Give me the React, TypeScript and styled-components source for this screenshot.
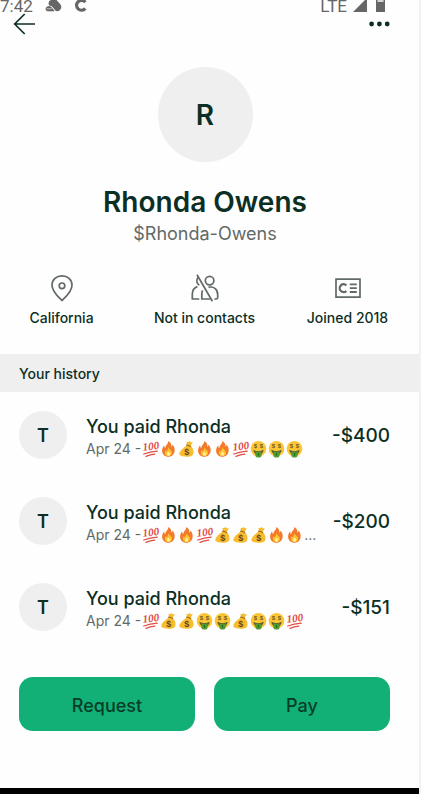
import React from "react";
import styled, { createGlobalStyle } from "styled-components";

const ink = "#0c2f25";
const muted = "#626a66";
const surface = "#efefef";

const GlobalStyle = createGlobalStyle`
  *, *::before, *::after { box-sizing: border-box; }
  body {
    margin: 0;
    background: #fefefe;
    color: ${ink};
    font-family: Inter, "Liberation Sans", sans-serif;
  }
  button { font: inherit; color: inherit; border: 0; padding: 0; background: none; cursor: pointer; }
  h1, h2, p, ul { margin: 0; padding: 0; }
  svg { display: block; flex: none; }
`;

const Page = styled.main`
  display: flex;
  flex-direction: column;
  min-height: 100vh;
  border-right: 2px solid #f1f1f5;
`;

const StatusBar = styled.div`
  display: flex;
  justify-content: space-between;
  align-items: flex-end;
  height: 12px;
  padding: 0 34px 0 0;
  color: #666666;
  font: 400 17px/12px Roboto, sans-serif;
`;

const StatusGroup = styled.div<{ $gap: number }>`
  display: flex;
  align-items: flex-end;
  gap: ${(p) => p.$gap}px;
  height: 12px;
`;

const Carrier = styled.span`
  margin-right: -3px;
`;

const Toolbar = styled.header`
  display: flex;
  justify-content: space-between;
  align-items: center;
  height: 24px;
  padding: 0 29px 0 12px;
`;

const IconButton = styled.button`
  display: grid;
  place-items: center;
  height: 24px;
`;

const Avatar = styled.div<{ $size: number; $font: number }>`
  display: grid;
  place-items: center;
  flex: none;
  width: ${(p) => p.$size}px;
  height: ${(p) => p.$size}px;
  border-radius: 50%;
  background: ${surface};
  font-size: ${(p) => p.$font}px;
  font-weight: 600;
`;

const Profile = styled.section`
  display: flex;
  flex-direction: column;
  align-items: center;
  padding: 31px 28px 0 19px;
`;

const Name = styled.h1`
  margin-top: 22px;
  font-size: 28px;
  line-height: 36px;
  font-weight: 600;
`;

const Handle = styled.p`
  color: ${muted};
  font-size: 18px;
  line-height: 28px;
  font-weight: 400;
`;

const Facts = styled.ul`
  display: grid;
  grid-template-columns: repeat(3, minmax(0, 1fr));
  gap: 58px;
  padding: 26px 29px 26px 19px;
  list-style: none;
`;

const Fact = styled.li`
  display: flex;
  flex-direction: column;
  align-items: center;
  gap: 6px;
  font-size: 14px;
  line-height: 20px;
  font-weight: 500;
  white-space: nowrap;
`;

const SectionTitle = styled.h2`
  padding: 2px 19px 0;
  background: ${surface};
  font-size: 14px;
  line-height: 36px;
  font-weight: 500;
`;

const History = styled.ul`
  display: flex;
  flex-direction: column;
  gap: 38px;
  padding: 19px 29px 0 19px;
  list-style: none;
`;

const Payment = styled.li`
  display: flex;
  align-items: center;
  gap: 19px;
`;

const Details = styled.div`
  flex: 1;
  min-width: 0;
  padding-top: 4px;
`;

const PaymentTitle = styled.p`
  font-size: 18px;
  line-height: 24px;
  font-weight: 500;
`;

const Note = styled.p`
  display: flex;
  align-items: center;
  color: ${muted};
  font-size: 14px;
  line-height: 20px;
  white-space: nowrap;
`;

const NoteDate = styled.span`
  margin-right: 1px;
`;

const Amount = styled.span`
  padding-top: 2px;
  font-size: 19px;
  line-height: 24px;
  font-weight: 500;
`;

const Actions = styled.div`
  display: grid;
  grid-template-columns: 1fr 1fr;
  gap: 19px;
  padding: 46px 29px 24px 19px;
`;

const ActionButton = styled.button`
  && {
    height: 54px;
    padding-top: 2px;
    border-radius: 14px;
    background: #12b076;
    color: #063d29;
    font-size: 18px;
    font-weight: 500;
  }
`;

const BottomBar = styled.div`
  height: 6px;
  margin-top: auto;
  background: #000000;
`;

const EmojiSvg = styled.svg`
  width: 18px;
  height: 18px;
  overflow: visible;
`;

const HundredIcon = () => (
  <EmojiSvg viewBox="0 0 18 18" role="img" aria-label="100">
    <text x="9" y="10" textAnchor="middle" fontFamily="Liberation Serif, serif" fontStyle="italic" fontWeight="700" fontSize="11" fill="#e04d43" transform="rotate(-6 8 8)">100</text>
    <path d="M1.8 14 Q8 11.6 15.2 11.2 M4 16.4 Q8.2 14.8 12.8 14.2" fill="none" stroke="#e04d43" strokeWidth="1.3" strokeLinecap="round" />
  </EmojiSvg>
);

const FireIcon = () => (
  <EmojiSvg viewBox="0 0 18 18" role="img" aria-label="Fire">
    <path d="M8.2 1 C11.5 2.6 11.6 5.4 11.4 6.8 C12.3 6.3 12.5 5.3 12.4 4.5 C14.3 6.5 15 8.8 14.6 11.3 C14.1 14.7 11.6 16.8 8.4 16.8 C4.8 16.8 2.3 14.4 2.1 11 C1.9 8.4 3.2 6.7 4.2 5.3 C4.1 6.7 4.5 7.6 5.3 8.2 C5.3 5 8.7 4.2 8.2 1Z" fill="#f37a2c" />
    <path d="M8.3 6.7 C8.5 9 11.8 9.8 12 12.6 C12.1 14.8 10.5 16.1 8.5 16.1 C6.2 16.1 4.8 14.6 4.9 12.6 C4.9 11.5 5.4 10.6 6 9.9 C6.1 10.8 6.4 11.3 7 11.6 C7 9.8 8.8 8.7 8.3 6.7Z" fill="#ffc52e" />
    <path d="M8.5 11.5 Q11 13 10.1 15.1 Q8.5 16.6 6.9 15.1 Q6.4 13.3 8.5 11.5Z" fill="#fff09a" />
  </EmojiSvg>
);

const BagIcon = () => (
  <EmojiSvg viewBox="0 0 18 18" role="img" aria-label="Money bag">
    <path d="M9 5.2 L8.5 1.7 Q10.4 2.5 11.5 1.1 Q12.8 2.7 14.9 2.3 L12.6 6 C15.7 8.6 16.4 13.3 14.5 15.2 C12.4 17.3 4 17.1 2 15.3 C.3 13.7 2.3 10.7 5 8.5 C6.6 7.2 7.5 6.1 9 5.2Z" fill="#f6bd2e" />
    <path d="M8.6 5.2 Q10.7 5.3 12.6 6.5" fill="none" stroke="#a36b1e" strokeWidth="1.2" strokeLinecap="round" />
    <text x="8.7" y="14.6" textAnchor="middle" fontFamily="Liberation Sans, sans-serif" fontWeight="700" fontSize="9" fill="#614b1c">$</text>
  </EmojiSvg>
);

const MoneyFaceIcon = () => (
  <EmojiSvg viewBox="0 0 18 18" role="img" aria-label="Money-mouth face">
    <circle cx="8.5" cy="8.8" r="7.8" fill="#fbc636" />
    <path d="M3.3 9.8 Q8.5 12.6 13.7 9.8 Q13.2 13 11.6 14 H5.4 Q3.8 13 3.3 9.8Z" fill="#5b5824" />
    <path d="M5.4 11.2 Q8.5 12.2 11.6 11.2 V15.2 Q11.6 17.5 8.5 17.5 Q5.4 17.5 5.4 15.2Z" fill="#529b34" />
    <path d="M8.5 12.7 V15.8" stroke="#267324" strokeWidth="1.2" />
    <g fill="#735923" fontFamily="Liberation Sans, sans-serif" fontWeight="700" fontSize="6" textAnchor="middle">
      <text x="5.5" y="8.4">$</text>
      <text x="11.5" y="8.4">$</text>
    </g>
  </EmojiSvg>
);

const noteIcons = { h: HundredIcon, f: FireIcon, b: BagIcon, m: MoneyFaceIcon };
type NoteIcon = keyof typeof noteIcons;

const payments: { amount: string; note: NoteIcon[]; more?: boolean }[] = [
  { amount: "-$400", note: ["h", "f", "b", "f", "f", "h", "m", "m", "m"] },
  { amount: "-$200", note: ["h", "f", "f", "h", "b", "b", "b", "f", "f"], more: true },
  { amount: "-$151", note: ["h", "b", "b", "m", "m", "b", "m", "m", "h"] },
];

const CloudIcon = () => (
  <svg width="17" height="12" viewBox="0 0 17 12" fill="#666666" aria-hidden="true">
    <path d="M4 5.4 C3 2.6 4 0 6.5 0 H11.5 L15.5 4.4 Q17.3 7.4 15 10 Q12.6 12.2 10 10.6 L6.5 6Z" />
    <path d="M4 6 Q6.6 6 7.6 8.6 L9.8 11.2 H3 Q.4 11.2 .6 8.6 Q1 6.2 4 6Z" />
    <path d="M1.5 8.8 H5.4 Q7 8.8 7.4 7.2 L10.6 11.4" fill="none" stroke="#fefefe" strokeWidth=".6" />
  </svg>
);

const StatusC = () => (
  <svg width="13" height="12" viewBox="0 0 13 12" fill="none" stroke="#666666" strokeWidth="3.2" aria-hidden="true">
    <path d="M11.3 2.3 A4.9 4.9 0 1 0 11.3 8.4" />
  </svg>
);

const SignalIcon = () => (
  <svg width="14" height="12" viewBox="0 0 14 12" fill="#666666" aria-hidden="true">
    <path d="M14 -2 V12 H0Z" />
  </svg>
);

const BatteryIcon = () => (
  <svg width="9" height="12" viewBox="0 0 9 12" aria-hidden="true">
    <path d="M0 0 H9 V12 H0Z" fill="#666666" />
    <path d="M1.5 0 H7.5 V2 H1.5Z" fill="#d4d4d4" />
  </svg>
);

const BackIcon = () => (
  <svg width="24" height="24" viewBox="0 0 24 24" fill="none" stroke={ink} strokeWidth="1.7" aria-hidden="true">
    <path d="M12.7 2 L2.7 12 L12.7 22 M2.7 12 H23" />
  </svg>
);

const MoreIcon = () => (
  <svg width="22" height="24" viewBox="0 0 22 24" fill={ink} aria-hidden="true">
    <circle cx="3.6" cy="12" r="2.4" />
    <circle cx="11.4" cy="12" r="2.4" />
    <circle cx="19.2" cy="12" r="2.4" />
  </svg>
);

const PinIcon = () => (
  <svg width="28" height="28" viewBox="0 0 28 28" fill="none" stroke={muted} strokeWidth="1.7" aria-hidden="true">
    <path d="M14 26.5 C11.5 24 4 17.8 4 11.2 C4 5.4 8.5 1.8 14 1.8 C19.5 1.8 24 5.4 24 11.2 C24 17.8 16.5 24 14 26.5Z" />
    <circle cx="14" cy="11.8" r="2.8" />
  </svg>
);

const NoContactIcon = () => (
  <svg width="28" height="28" viewBox="0 0 28 28" fill="none" stroke={muted} strokeWidth="1.7" strokeLinejoin="round" aria-hidden="true">
    <path d="M7 3.5 C4.9 6.1 5.6 9.6 8.3 11.2 M6.4 12.6 C3.2 13.5 1.3 16.4 1.3 20.5 V25 H8.3" />
    <circle cx="18.6" cy="6.6" r="4.3" />
    <path d="M11.6 16.4 C10.8 17.6 10.8 19 10.8 20.5 V25 H19.6 M17.5 13.2 C23.2 12.2 26.7 15.4 26.7 20.5 V23.6 Q26.7 25 25.3 25 H23.4" />
    <path d="M6 .8 L21.4 27.3" />
  </svg>
);

const CardIcon = () => (
  <svg width="28" height="28" viewBox="0 0 28 28" fill="none" stroke={muted} aria-hidden="true">
    <path d="M2 5.2 H26 V23.2 H2Z" strokeWidth="1.7" />
    <path d="M12.4 11.4 A3.9 4 0 1 0 12.4 17" strokeWidth="2.2" />
    <path d="M15.8 10.4 H22.8 M15.8 14.2 H22.8 M15.8 18 H22.8" strokeWidth="1.8" />
  </svg>
);

export default function App() {
  return (
    <>
      <GlobalStyle />
      <Page>
        <StatusBar>
          <StatusGroup $gap={12}>
            <span>7:42</span>
            <CloudIcon />
            <StatusC />
          </StatusGroup>
          <StatusGroup $gap={9}>
            <Carrier>LTE</Carrier>
            <SignalIcon />
            <BatteryIcon />
          </StatusGroup>
        </StatusBar>
        <Toolbar>
          <IconButton aria-label="Back"><BackIcon /></IconButton>
          <IconButton aria-label="More options"><MoreIcon /></IconButton>
        </Toolbar>
        <Profile>
          <Avatar $size={95} $font={28}>R</Avatar>
          <Name>Rhonda Owens</Name>
          <Handle>$Rhonda-Owens</Handle>
        </Profile>
        <Facts>
          <Fact><PinIcon />California</Fact>
          <Fact><NoContactIcon />Not in contacts</Fact>
          <Fact><CardIcon />Joined 2018</Fact>
        </Facts>
        <SectionTitle>Your history</SectionTitle>
        <History>
          {payments.map((payment) => (
            <Payment key={payment.amount}>
              <Avatar $size={48} $font={18}>T</Avatar>
              <Details>
                <PaymentTitle>You paid Rhonda</PaymentTitle>
                <Note>
                  <NoteDate>Apr 24 -</NoteDate>
                  {payment.note.map((kind, i) => {
                    const Icon = noteIcons[kind];
                    return <Icon key={i} />;
                  })}
                  {payment.more && <span>...</span>}
                </Note>
              </Details>
              <Amount>{payment.amount}</Amount>
            </Payment>
          ))}
        </History>
        <Actions>
          <ActionButton>Request</ActionButton>
          <ActionButton>Pay</ActionButton>
        </Actions>
        <BottomBar />
      </Page>
    </>
  );
}
